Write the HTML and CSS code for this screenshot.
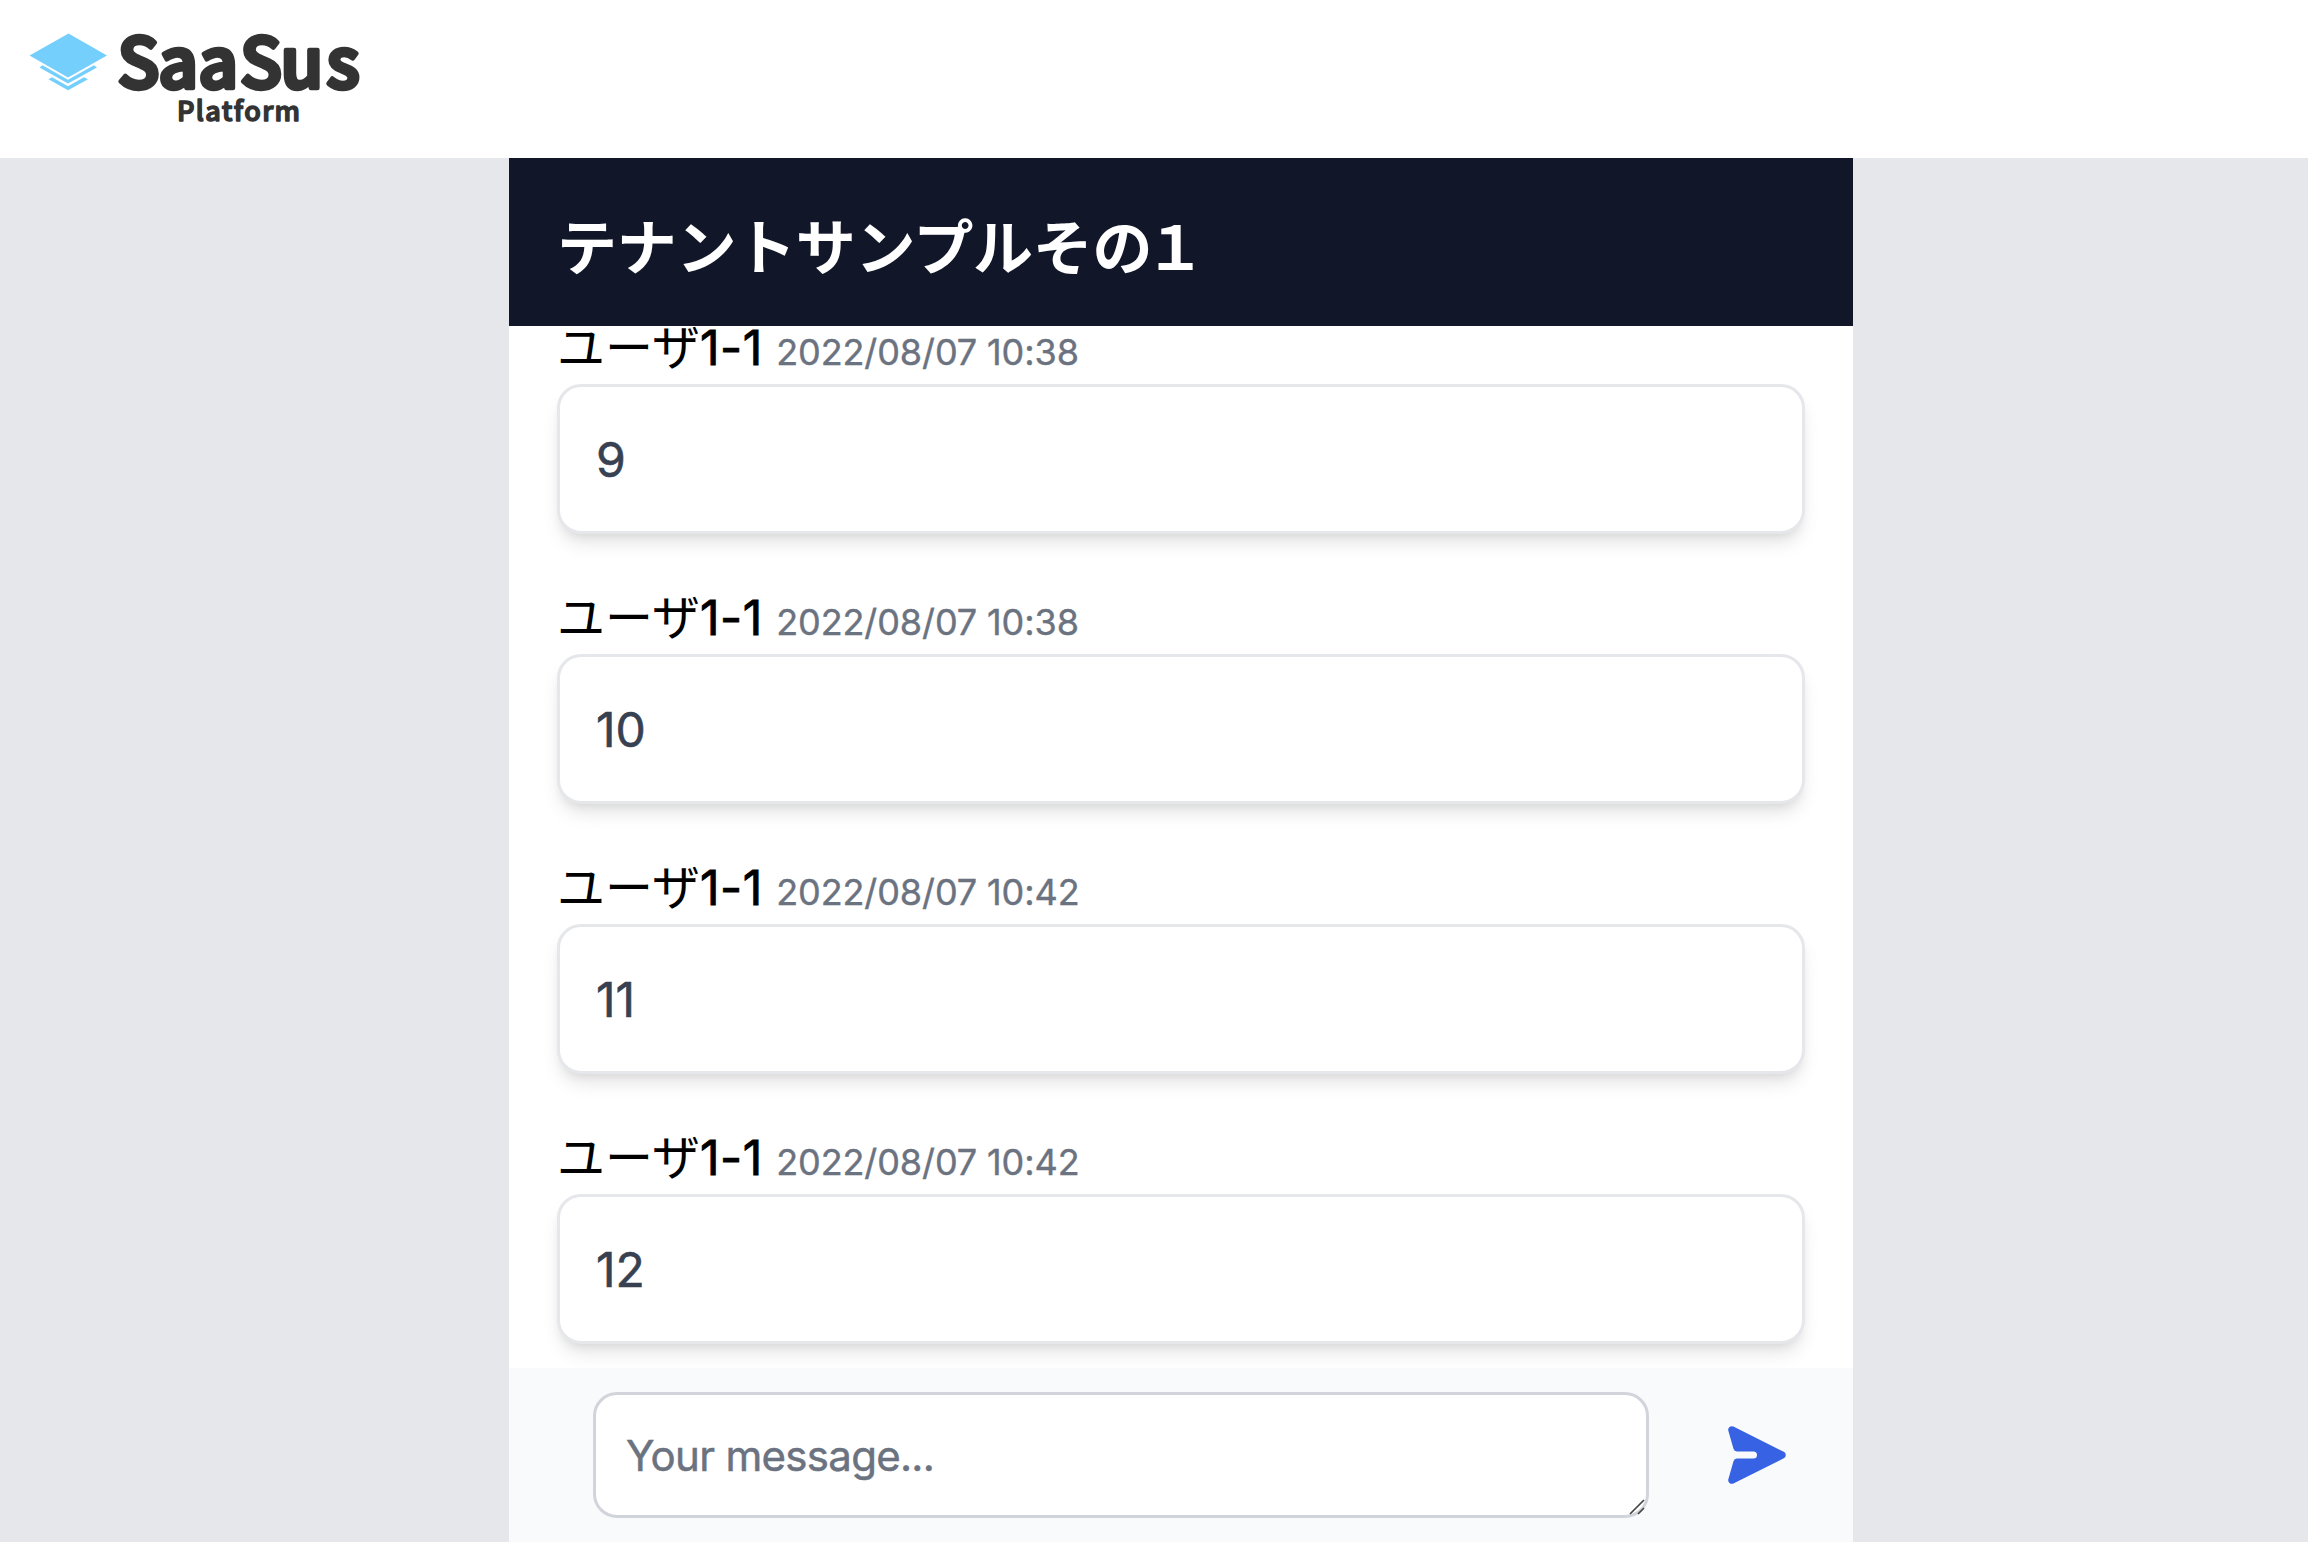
FILE: index.html
```html
<!DOCTYPE html>
<html lang="ja">
<head>
<meta charset="utf-8">
<title>SaaSus Platform</title>
<link rel="stylesheet" href="styles.css">
</head>
<body>
<header class="topbar">
  <svg class="logo" width="400" height="158" viewBox="0 0 400 158" role="img" aria-label="SaaSus Platform">
    <g fill="#75cffc">
      <path d="M68.5 33.5 107 55.5 68 77.5 29.5 55.5Z"/>
      <path d="M39.5 67.5 42.5 65.3 68 79.8 94 65.3 97 67.5 68 83.6Z"/>
      <path d="M48.5 79.3 52 77.2 68 86.3 84 77.2 88 79.3 68 90.3Z"/>
    </g>
    <text class="logo-name" x="117.500 158.500 198.500 240 280.500 326.500" y="87.500">SaaSus</text>
    <text class="logo-sub" x="177" y="120.500" textLength="123">Platform</text>
  </svg>
</header>
<main class="panel">
  <h1 class="title">テナントサンプルその<span class="title-num">１</span></h1>
  <div class="messages">
    <article class="message">
      <div class="meta">ユーザ<span class="num">1-1</span> <time class="time">2022/08/07 10:38</time></div>
      <p class="bubble">9</p>
    </article>
    <article class="message">
      <div class="meta">ユーザ<span class="num">1-1</span> <time class="time">2022/08/07 10:38</time></div>
      <p class="bubble">10</p>
    </article>
    <article class="message">
      <div class="meta">ユーザ<span class="num">1-1</span> <time class="time">2022/08/07 10:42</time></div>
      <p class="bubble">11</p>
    </article>
    <article class="message">
      <div class="meta">ユーザ<span class="num">1-1</span> <time class="time">2022/08/07 10:42</time></div>
      <p class="bubble">12</p>
    </article>
  </div>
  <form class="composer">
    <div class="field">
      <textarea class="input" rows="1" placeholder="Your message..."></textarea>
      <svg class="grip" width="16" height="16" viewBox="0 0 16 16"><path d="M1 15 15 1M9 15 15 9" stroke="#444" stroke-width="1.700"/></svg>
    </div>
    <button class="send" type="button" aria-label="Send">
      <svg class="send-icon" width="72" height="72" viewBox="0 0 20 20" fill="currentColor"><path d="M10.894 2.553a1 1 0 00-1.788 0l-7 14a1 1 0 001.169 1.409l5-1.429A1 1 0 009 15.571V11a1 1 0 112 0v4.571a1 1 0 00.725.962l5 1.428a1 1 0 001.170-1.408l-7-14z"/></svg>
    </button>
  </form>
</main>
</body>
</html>
```
FILE: styles.css
```css
* { box-sizing: border-box; }
body {
  margin: 0;
  height: 1542px;
  display: flex;
  flex-direction: column;
  overflow: hidden;
  background: #e5e7eb;
  color: #000;
  font: 48px/72px Inter, "Noto Sans CJK JP", sans-serif;
}
.topbar { flex: none; height: 158px; background: #fff; }
.logo { display: block; }
.logo text {
  font-family: "Noto Sans CJK JP", sans-serif;
  font-weight: 500;
  fill: #333;
  stroke: #333;
  stroke-linejoin: round;
}
.logo-name { font-size: 69px; stroke-width: 4.5px; }
.logo-sub { font-size: 27px; stroke-width: 1.5px; }
.panel {
  flex: 1;
  min-height: 0;
  width: 1344px;
  margin-left: 509px;
  display: flex;
  flex-direction: column;
  background: #fff;
}
.title {
  flex: none;
  height: 168px;
  margin: 0;
  padding: 48px 48px 36px;
  background: #111628;
  color: #fff;
  font-size: 60px;
  line-height: 84px;
  font-weight: 700;
  letter-spacing: -0.3px;
}
.title-num { margin-left: -7px; }
.messages {
  flex: 1;
  min-height: 0;
  overflow: hidden;
  display: flex;
  flex-direction: column;
  justify-content: flex-end;
  gap: 48px;
  padding: 0 48px 24px;
}
.message { flex: none; }
.meta {
  height: 72px;
  white-space: nowrap;
}
.num {
  letter-spacing: 0.5px;
  -webkit-text-stroke: 0.9px;
}
.time {
  color: #6b7280;
  font-size: 36px;
  letter-spacing: -0.1px;
  -webkit-text-stroke: 0.4px;
}
.bubble {
  margin: 0;
  height: 150px;
  padding: 37px 36px 35px;
  border: 3px solid #e5e7eb;
  border-radius: 24px;
  background: #fff;
  color: #374151;
  -webkit-text-stroke: 0.6px;
  box-shadow: 0 12px 18px -3px rgba(0, 0, 0, .1), 0 6px 12px -6px rgba(0, 0, 0, .1);
}
.composer {
  flex: none;
  display: flex;
  align-items: center;
  gap: 48px;
  padding: 24px 36px 24px 84px;
  background: #f9fafb;
}
.field { position: relative; flex: 1; height: 126px; }
.input {
  display: block;
  width: 100%;
  height: 126px;
  padding: 31px 30px 29px;
  border: 3px solid #d1d5db;
  border-radius: 24px;
  background: #fff;
  font: 42px/60px Inter, sans-serif;
  letter-spacing: -0.7px;
  -webkit-text-stroke: 0.5px;
  resize: none;
  overflow: hidden;
}
.input::placeholder { color: #6b7280; opacity: 1; }
.grip { position: absolute; right: 4px; bottom: 3px; fill: none; }
.send {
  width: 120px;
  height: 120px;
  padding: 24px;
  border: 0;
  background: none;
  color: #3662e3;
}
.send-icon { display: block; transform: rotate(90deg); }
```
